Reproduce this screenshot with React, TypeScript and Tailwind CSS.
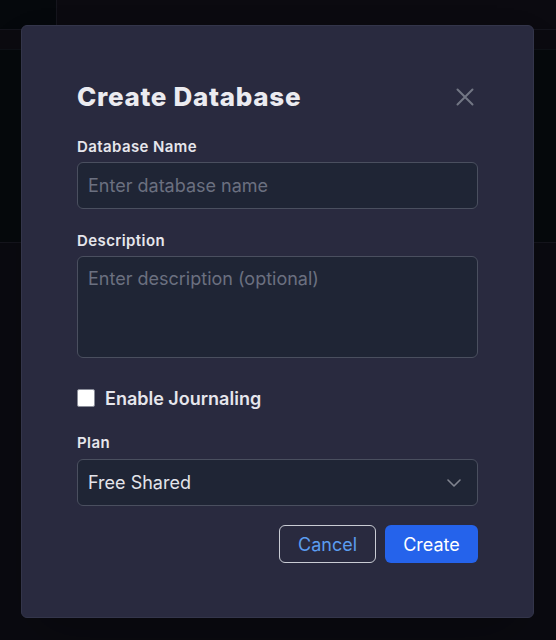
import React from "react";

export default function App() {
  return (
    <div
      className="relative h-[640px] w-[556px] overflow-hidden bg-[#0a0a10]"
      style={{ fontFamily: "Inter, 'Noto Sans', sans-serif" }}
    >
      {/* background app (dimmed) */}
      <div className="flex h-full flex-col">
        <div className="flex h-[29px]">
          <div className="w-[57px] border-r border-[#15151d] bg-[#05080c]" />
          <div className="flex-1 bg-[#0b0a10]" />
        </div>
        <div className="flex h-[20px] border-t border-[#15151d]">
          <div className="w-[57px] bg-[#0c0b10]" />
          <div className="flex-1 bg-[#0b0a10]" />
        </div>
        <div className="h-[193px] border-t border-[#0e1116] bg-[#06090c]" />
        <div className="flex-1 border-t border-[#15151d] bg-[#0a0a10]" />
      </div>

      {/* modal */}
      <div className="absolute inset-0 flex pl-[21px] pt-[25px]">
        <div className="flex h-[593px] w-[513px] flex-col rounded-md border border-[#33354a] bg-[#292a3f] px-[55px] pt-[55px] shadow-2xl">
          <div className="flex h-8 items-center justify-between">
            <h2 className="text-[26px] font-extrabold leading-8 tracking-[0.7px] text-[#ebebf0]">Create Database</h2>
            <svg width="18" height="18" viewBox="0 0 18 18" className="mr-[4px] text-[#727684]">
              <path d="M1.5 1.5 L16.5 16.5 M16.5 1.5 L1.5 16.5" stroke="currentColor" strokeWidth="2" strokeLinecap="round" />
            </svg>
          </div>

          <label className="mt-[24px] h-5 text-[15px] font-semibold leading-5 tracking-[0.4px] text-[#e6e6ec]">Database Name</label>
          <div className="mt-[5px] flex h-[47px] items-center rounded-md border border-[#4a4f5f] bg-[#1f2535] px-[10px] text-[18px] text-[#6b7080]">
            Enter database name
          </div>

          <label className="mt-[22px] h-5 text-[15px] font-semibold leading-5 tracking-[0.4px] text-[#e6e6ec]">Description</label>
          <div className="mt-[5px] h-[102px] rounded-md border border-[#4a4f5f] bg-[#1f2535] px-[10px] pt-[10px] text-[18px] leading-6 text-[#6b7080]">
            Enter description (optional)
          </div>

          <div className="mt-[28px] flex h-6 items-center gap-[10px]">
            <div className="h-[18px] w-[18px] rounded-[2px] border border-[#8a8d99] bg-white" />
            <span className="text-[18px] font-semibold text-[#e6e6ec]">Enable Journaling</span>
          </div>

          <label className="mt-[23px] h-5 text-[15px] font-semibold leading-5 tracking-[0.4px] text-[#e6e6ec]">Plan</label>
          <div className="mt-[6px] flex h-[47px] items-center justify-between rounded-md border border-[#4a4f5f] bg-[#1f2535] pl-[10px] pr-[16px] text-[18px] text-[#e3e4ea]">
            <span>Free Shared</span>
            <svg width="14" height="8" viewBox="0 0 14 8" className="text-[#80848f]">
              <path d="M1 1 L7 7 L13 1" stroke="currentColor" strokeWidth="1.6" fill="none" strokeLinecap="round" strokeLinejoin="round" />
            </svg>
          </div>

          <div className="mt-[19px] flex justify-end gap-[9px]">
            <button className="h-[38px] w-[97px] rounded-md border border-[#c9ccd4] text-[18px] text-[#5b9df0]">
              Cancel
            </button>
            <button className="h-[38px] w-[93px] rounded-md bg-[#2563eb] text-[18px] text-white">
              Create
            </button>
          </div>
        </div>
      </div>
    </div>
  );
}
